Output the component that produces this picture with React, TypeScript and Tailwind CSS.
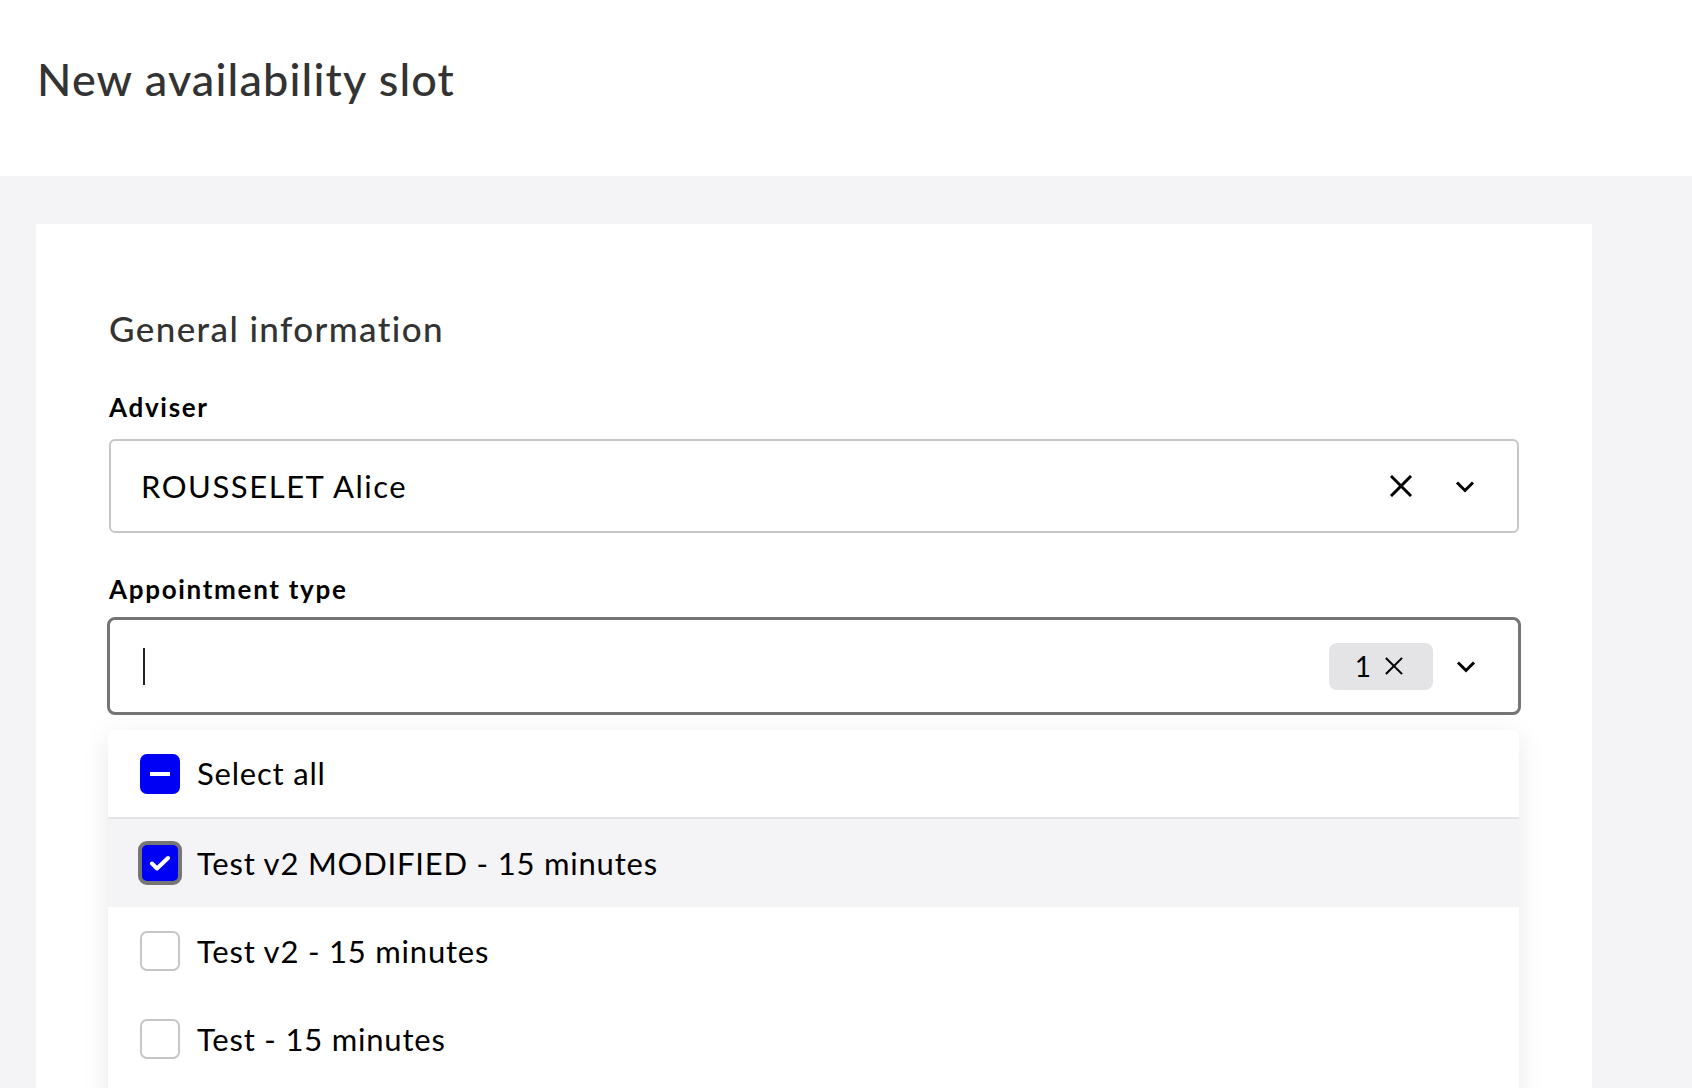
import React from "react"

function CloseIcon({ size = 22, stroke = 3 }: { size?: number; stroke?: number }) {
  return (
    <svg width={size} height={size} viewBox="0 0 22 22" fill="none">
      <path d="M2 2l18 18M20 2L2 20" stroke="#000" strokeWidth={stroke} strokeLinecap="square" />
    </svg>
  )
}

function Chevron() {
  return (
    <svg width="20" height="13" viewBox="0 0 20 13" fill="none">
      <path d="M2 2.5l8 8 8-8" stroke="#000" strokeWidth="3" />
    </svg>
  )
}

type Option = { label: string; checked?: boolean; focused?: boolean }

const options: Option[] = [
  { label: "Test v2 MODIFIED - 15 minutes", checked: true, focused: true },
  { label: "Test v2 - 15 minutes" },
  { label: "Test - 15 minutes" },
]

function Checkbox({ checked, focused }: { checked?: boolean; focused?: boolean }) {
  if (checked) {
    return (
      <span className={`flex shrink-0 items-center justify-center bg-[#0000f5] ${focused ? "-m-[2px] h-[44px] w-[44px] rounded-[9px] border-[4px] border-[#767676]" : "h-[40px] w-[40px] rounded-[7px]"}`}>
        <svg width="22" height="16" viewBox="0 0 22 16" fill="none">
          <path d="M3 8.5l5 5L19 3" stroke="#fff" strokeWidth="4" strokeLinecap="round" strokeLinejoin="round" />
        </svg>
      </span>
    )
  }
  return <span className="h-[40px] w-[40px] shrink-0 rounded-[7px] border-2 border-[#c6c6c6] bg-white" />
}

export default function App() {
  return (
    <div className="h-[1088px] overflow-hidden bg-[#f4f4f6] font-['Lato',sans-serif] tracking-[0.05em] text-black">
      <header className="h-[176px] bg-white pl-[37px] pt-[52px]">
        <h1 className="text-[45px] font-medium leading-[54px] tracking-[0.025em] text-[#333]">New availability slot</h1>
      </header>

      <main className="pl-[36px] pr-[100px] pt-[48px]">
        <div className="h-[900px] bg-white px-[73px] pt-[83px]">
          <h2 className="text-[35px] font-medium leading-[42px] tracking-[0.04em] text-[#333]">General information</h2>

          <div className="mt-[43px]">
            <label className="block text-[26px] font-bold leading-[31px] tracking-[0.065em]">Adviser</label>
            <div className="mt-[16px] flex h-[94px] items-center rounded-[6px] border-2 border-[#c6c6c6] pl-[30px] pr-[42px]">
              <span className="flex-1 text-[31px] leading-[37px] tracking-[0.05em]">ROUSSELET Alice</span>
              <CloseIcon />
              <span className="ml-[43px]"><Chevron /></span>
            </div>
          </div>

          <div className="mt-[41px]">
            <label className="block text-[26px] font-bold leading-[31px] tracking-[0.065em]">Appointment type</label>
            <div className="relative mt-[12px]">
              <div className="-mx-[2px] flex h-[98px] items-center rounded-[8px] border-[3px] border-[#757575] pl-[31px] pr-[42px]">
                <span className="flex-1">
                  <span className="ml-[2px] block h-[37px] w-[2px] bg-[#222]" />
                </span>
                <span className="flex h-[47px] items-center gap-[14px] rounded-[8px] bg-[#e4e4e7] pl-[26px] pr-[30px] text-[28px] leading-none tracking-normal">
                  1
                  <CloseIcon size={18} stroke={2.5} />
                </span>
                <span className="ml-[23px]"><Chevron /></span>
              </div>

              <div className="absolute left-[-1px] right-0 top-[113px] rounded-t-[6px] bg-white shadow-[0_6px_28px_rgba(0,0,0,0.09)]">
                <div className="flex h-[89px] items-center gap-[17px] border-b-2 border-[#e4e4e7] pl-[32px]">
                  <span className="flex h-[40px] w-[40px] items-center justify-center rounded-[7px] bg-[#0000f5]">
                    <span className="h-[4px] w-[20px] bg-white" />
                  </span>
                  <span className="text-[31px] leading-[37px]">Select all</span>
                </div>
                {options.map(o => (
                  <div key={o.label} className={`flex h-[88px] items-center gap-[17px] pl-[32px] ${o.checked ? "bg-[#f4f4f6]" : ""}`}>
                    <Checkbox checked={o.checked} focused={o.focused} />
                    <span className="text-[31px] leading-[37px]">{o.label}</span>
                  </div>
                ))}
                <div className="h-[88px]" />
              </div>
            </div>
          </div>
        </div>
      </main>
    </div>
  )
}
